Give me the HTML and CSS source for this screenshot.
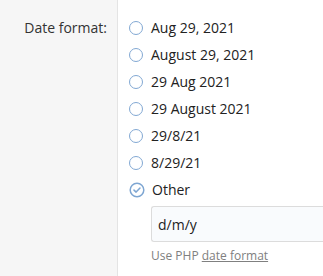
FILE: index.html
```html
<!DOCTYPE html>
<html lang="en">
<head>
    <meta charset="UTF-8">
    <meta name="viewport" content="width=device-width, initial-scale=1.0">
    <title>Date format</title>
    <link rel="stylesheet" href="styles.css">
</head>
<body>
    <div class="form-row">
        <div class="label-col">
            <label class="field-label">Date format:</label>
        </div>
        <div class="field-col">
            <label class="option"><span class="radio"></span>Aug 29, 2021</label>
            <label class="option"><span class="radio"></span>August 29, 2021</label>
            <label class="option"><span class="radio"></span>29 Aug 2021</label>
            <label class="option"><span class="radio"></span>29 August 2021</label>
            <label class="option"><span class="radio"></span>29/8/21</label>
            <label class="option"><span class="radio"></span>8/29/21</label>
            <label class="option">
                <svg class="radio-checked" width="16" height="16" viewBox="0 0 16 16">
                    <circle cx="8" cy="8" r="6.8" fill="none" stroke="#7ea6d2" stroke-width="1.5"/>
                    <path d="M5 8.1 L7.1 10.1 L11 6" fill="none" stroke="#7ea6d2" stroke-width="1.5" stroke-linecap="round" stroke-linejoin="round"/>
                </svg>Other
            </label>
            <input class="text-input" type="text" value="d/m/y">
            <p class="hint">Use PHP <a href="#">date format</a></p>
        </div>
    </div>
</body>
</html>
```

FILE: styles.css
```css
body {
    margin: 0;
    font-family: "Open Sans", "Noto Sans", sans-serif;
    font-size: 14px;
    color: #222;
    background: #fff;
    overflow: hidden;
}
.form-row {
    display: flex;
    height: 276px;
}
.label-col {
    width: 118px;
    flex-shrink: 0;
    background: #f6f6f6;
    border-right: 1px solid #e4e4e4;
    box-sizing: border-box;
    text-align: right;
    padding: 16px 10px 0 0;
}
.field-label {
    color: #333;
    line-height: 24px;
}
.field-col {
    flex: 1;
    padding: 14px 0 0 11px;
    min-width: 0;
}
.option {
    display: flex;
    align-items: center;
    height: 27px;
    white-space: nowrap;
}
.radio {
    width: 12px;
    height: 12px;
    border: 1.5px solid #82a8d3;
    border-radius: 50%;
    margin-right: 8px;
}
.radio-checked {
    margin-right: 7px;
}
.text-input {
    display: block;
    box-sizing: border-box;
    width: calc(100% - 22px);
    height: 36px;
    margin: 3px 0 0 22px;
    padding: 0 6px;
    border: 1px solid #dcdcdc;
    border-right-width: 0;
    border-radius: 3px 0 0 3px;
    background: #f9fbfd;
    font-family: inherit;
    font-size: 14px;
    color: #222;
}
.hint {
    margin: 5px 0 0 22px;
    font-size: 12px;
    color: #808080;
}
.hint a {
    color: #808080;
}
```
